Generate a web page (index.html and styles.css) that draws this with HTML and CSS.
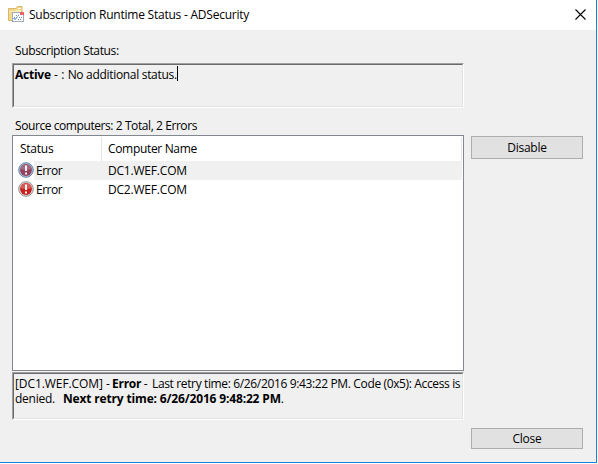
FILE: index.html
```html
<!DOCTYPE html>
<html lang="en">
<head>
<meta charset="utf-8">
<title>Subscription Runtime Status - ADSecurity</title>
<link rel="stylesheet" href="styles.css">
</head>
<body>
<div class="window">
  <header class="titlebar">
    <svg class="app-icon" width="17" height="17" viewBox="0 0 17 17">
      <path d="M.5 14.5V2.500H8L9.500.5h4.500V14.500z" fill="#f3d78a" stroke="#d9b967"/>
      <path d="M1 5h6l1-1h5v2H1z" fill="#fbebb8"/>
      <rect x="10" y="2" width="3" height="1" fill="#fff"/>
      <rect x="4.500" y="6.500" width="11" height="9" fill="#f8fafc" stroke="#a3adb9"/>
      <rect x="12" y="6" width="4" height="3" fill="#e9626c"/>
      <path d="M8 9.500h1m1 0h1M6 11.500h1m4 0h1m1 0h1M10 13.500h1m1 0h1" stroke="#8193a8" fill="none"/>
      <path d="M5.500 12L7 13.500l2.500-3" stroke="#3d83bd" fill="none"/>
    </svg>
    <h1 class="title">Subscription Runtime Status - ADSecurity</h1>
    <svg class="close-icon" width="11" height="11" viewBox="0 0 11 11"><path d="M.5.5l10 10M10.500.5l-10 10" stroke="#000" stroke-width="1.100"/></svg>
  </header>
  <main class="content">
    <section class="details">
      <div class="label label-status">Subscription Status:</div>
      <div class="box status-box"><b class="active">Active</b><span class="status-dash"> - : </span><span class="status-text">No additional status.</span><i class="caret"></i></div>
      <div class="label label-source">Source computers: 2 Total, 2 Errors</div>
      <div class="list">
        <div class="list-head"><span class="col-status">Status</span><span class="col-name">Computer Name</span></div>
        <div class="row">
          <svg class="err" width="16" height="16" viewBox="0 0 16 16"><circle cx="8" cy="8" r="7.300" fill="#a7bed4" stroke="#6487ab"/><circle cx="8" cy="8" r="5.900" fill="#94405e"/><path d="M2.500 7a5.600 5.600 0 0 1 11 0q-5.500 2-11 0" fill="#a76880"/><path d="M7 3.500h2V9H7zM7 10.500h2v2H7z" fill="#eef3fa"/></svg>
          <span class="cell selected state">Error</span><span class="cell selected name">DC1.WEF.COM</span>
        </div>
        <div class="row">
          <svg class="err" width="16" height="16" viewBox="0 0 16 16"><circle cx="8" cy="8" r="7.300" fill="#d8d8d8" stroke="#929292"/><circle cx="8" cy="8" r="5.900" fill="#c9201f"/><path d="M2.500 7a5.600 5.600 0 0 1 11 0q-5.500 2-11 0" fill="#dc5a55"/><path d="M7 3.500h2V9H7zM7 10.500h2v2H7z" fill="#fff"/></svg>
          <span class="cell state">Error</span><span class="cell name">DC2.WEF.COM</span>
        </div>
      </div>
      <div class="box message-box">
        <div class="line"><span class="host">[DC1.WEF.COM] - </span><b class="error-word">Error</b><span class="dash"> - </span><span class="retry">Last retry time: 6/26/2016 9:43:22 PM. Code (0x5): Access is</span></div>
        <div class="line"><span class="denied">denied.</span><b class="next">Next retry time: 6/26/2016 9:48:22 PM</b><span>.</span></div>
      </div>
    </section>
    <aside class="actions">
      <button class="button disable">Disable</button>
      <button class="button close">Close</button>
    </aside>
  </main>
</div>
</body>
</html>
```

FILE: styles.css
```css
* { box-sizing: border-box; }
body {
  margin: 0;
  background: #fff;
  color: #000;
  font: 12px/15px "Open Sans", "Noto Sans", sans-serif;
  letter-spacing: -0.25px;
}
.window {
  display: flex;
  flex-direction: column;
  width: 597px;
  height: 463px;
  border: solid #1883d7;
  border-width: 0 1px 1px 0;
}
.titlebar {
  display: flex;
  height: 30px;
  padding: 6px 10px 0 8px;
  background: #fff;
}
.title { margin: 1px 0 0 4px; font: inherit; white-space: pre; letter-spacing: -0.23px; }
.close-icon { margin: 3px 0 0 auto; }
.content {
  display: flex;
  flex: 1;
  gap: 7px;
  padding-left: 12px;
  background: #f0f0f0;
}
.details { display: flex; flex-direction: column; width: 452px; }
.label { padding-left: 3px; white-space: pre; }
.label-status { margin-top: 13px; height: 20px; letter-spacing: -0.37px; }
.label-source { margin-top: 10px; height: 17px; letter-spacing: -0.42px; }
.box {
  position: relative;
  border: 1px solid;
  border-color: #a0a0a0 #fff #fff #a0a0a0;
  padding: 3px 2px;
}
.box::before {
  content: "";
  position: absolute;
  inset: 0;
  border: 1px solid;
  border-color: #696969 #e3e3e3 #e3e3e3 #696969;
}
.status-box { display: flex; height: 45px; white-space: pre; }
.status-dash { letter-spacing: 0.1px; }
.status-text { letter-spacing: -0.31px; }
.caret { width: 1px; height: 15px; background: #000; margin-top: -1px; }
.list {
  height: 236px;
  border: 1px solid #828790;
  background: #fff;
  padding: 1px;
}
.list-head { display: flex; height: 24px; line-height: 24px; }
.col-status { width: 88px; padding-left: 6px; border-right: 1px solid #e5e5e5; }
.col-name { flex: 1; padding-left: 6px; border-right: 1px solid #e5e5e5; letter-spacing: -0.33px; }
.row { display: flex; height: 19px; padding-left: 4px; }
.err { margin: 1px 0 0; }
.cell { line-height: 19px; padding-left: 2px; }
.state { width: 68px; letter-spacing: -0.5px; }
.name { flex: 1; padding-left: 6px; letter-spacing: -0.2px; }
.selected { background: #f0f0f0; }
.message-box { height: 48px; margin-top: 1px; }
.line { display: flex; height: 15px; white-space: pre; }
.host { width: 97px; letter-spacing: -0.08px; }
.error-word { width: 29px; letter-spacing: -0.25px; }
.dash { width: 11px; }
.retry { letter-spacing: -0.36px; }
.denied { width: 48px; }
.next { letter-spacing: -0.16px; }
.actions {
  display: flex;
  flex-direction: column;
  justify-content: space-between;
  width: 112px;
  padding: 106px 0 13px;
}
.button {
  height: 23px;
  padding: 0;
  border: 1px solid #adadad;
  background: #e1e1e1;
  color: #000;
  font: inherit;
  letter-spacing: inherit;
}
.close { height: 21px; }
```
